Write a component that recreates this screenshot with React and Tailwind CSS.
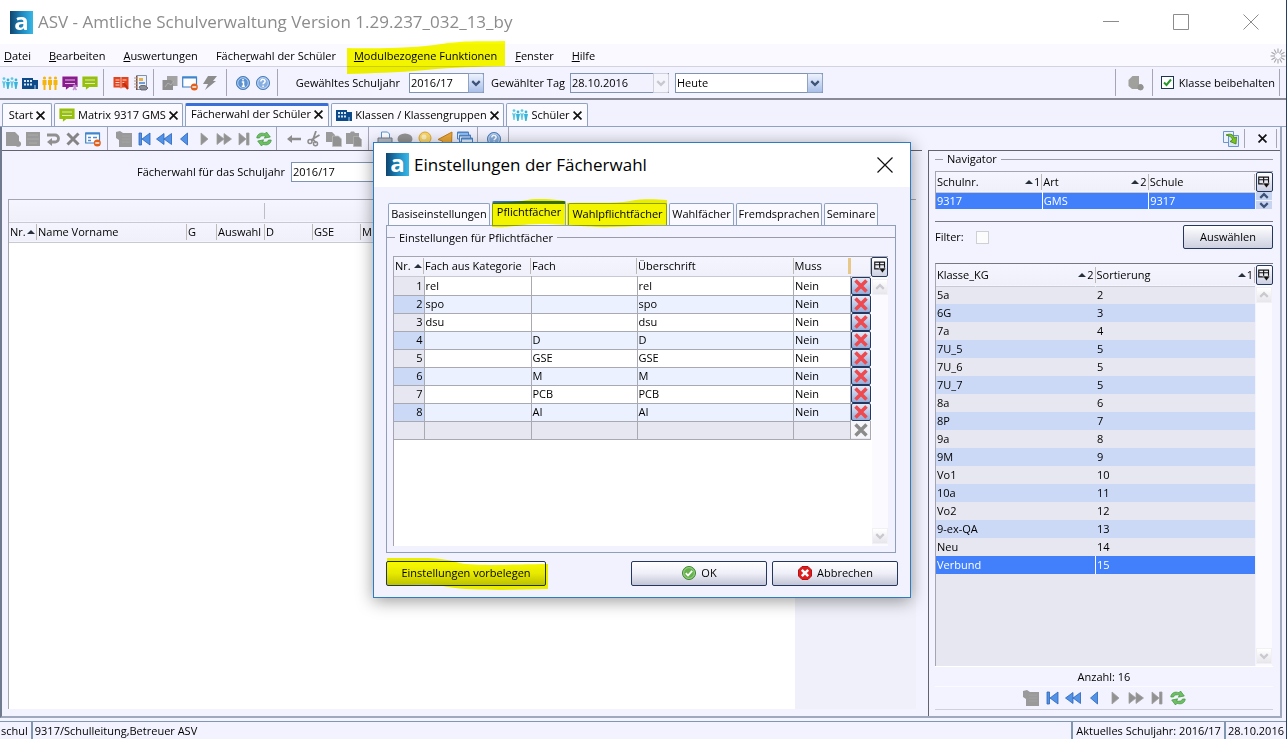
import React from "react";

const GRAY = "#9a9a9a";

function Svg({ children, className = "size-4" }) {
  return (
    <svg viewBox="0 0 16 16" className={`${className} shrink-0`} fill="none" aria-hidden="true">
      {children}
    </svg>
  );
}

/* ---------- icons ---------- */
const PeopleCyan = () => (
  <Svg>
    {[2, 6, 10, 14].map((x, i) => (
      <g key={x} fill={i % 2 ? "#36b5d8" : "#5cc8e4"}>
        <circle cx={x} cy={i % 2 ? 5 : 3.6} r="1.4" />
        <path d={i % 2 ? `M${x - 2} 7h4l-.8 3.5-.6 3.5h-1.4l-.6-3.500z` : `M${x - 2} 5.500l1.200 1h1.600l1.200-1-1 3.500-.4 4h-1.200l-.5-4z`} />
      </g>
    ))}
  </Svg>
);
const Building = () => (
  <Svg>
    <path d="M0 3h11v2h5v9H0z" fill="#0d4a8a" />
    <path d="M2 5h2v2H2zM5 5h2v2H5zM8 5h2v2H8zM2 8.500h2v2H2zM5 8.500h2v2H5zM8 8.500h2v2H8z" fill="#d5e6f6" />
    <path d="M12 10h2v4h-2z" fill="#5d8fc0" />
  </Svg>
);
const PeopleYellow = () => (
  <Svg>
    {[2.5, 8, 13.5].map((x) => (
      <g key={x} fill="#f5b50d">
        <circle cx={x} cy="3" r="1.600" />
        <path d={`M${x - 2} 5h4v5h-1v5h-2v-5h-1z`} />
      </g>
    ))}
  </Svg>
);
const Board = ({ color, badge }) => (
  <Svg>
    <path d="M1 2h14v9.500H7l-2.500 2v-2H1z" fill={color} stroke={color} strokeWidth="1.200" />
    <path d="M3 5h10M3 8.500h10" stroke="#fff" strokeOpacity=".7" strokeWidth="1.100" />
    {badge && <path d="M11 10.500l3.500 4.500M14.500 10.500L11 15M12.700 9.500v2" stroke="#c28ad0" strokeWidth="1.500" />}
  </Svg>
);
const RedBook = () => (
  <Svg>
    <path d="M.5 2h15v10.500h-6L8 13.500l-1.500-1h-6z" fill="#e2431e" />
    <path d="M2.500 5h4M2.500 7.500h4M2.500 10h4M9.500 5h4M9.500 7.500h2" stroke="#fbd9cf" strokeWidth="1.100" />
    <path d="M8 2v11" stroke="#fbd9cf" strokeWidth=".8" />
    <path d="M10.500 8l4.500 6" stroke="#c42d10" strokeWidth="2.200" />
  </Svg>
);
const Notebook = () => (
  <Svg>
    <path d="M3.500.5h10v14h-10z" fill="#eef3fb" stroke="#8391a8" />
    <path d="M3 1h1.500v14H3z" fill="#7a4a3a" />
    <path d="M1 3h3M1 6h3M1 9h3M1 12h3" stroke="#a98" />
    <path d="M6 3h4v3H6z" fill="#e5b24a" />
    <path d="M6 8h6" stroke="#4b7fcc" strokeWidth="1.500" />
    <path d="M6 12l2-1.500h4l3 2.500-2 2H8z" fill="#8a8d93" stroke="#55585f" strokeWidth=".8" />
  </Svg>
);
const GrayCopy = () => (
  <Svg>
    <path d="M5 1h10.500v10H5z" fill="#a3a3a3" />
    <path d="M.5 5h8.500l2 2v8H.5z" fill="#8f8f8f" />
    <path d="M3 12l3-4 3 2 3-4" stroke="#b0b0b0" />
  </Svg>
);
const WindowMinus = ({ lines }) => (
  <Svg>
    <path d="M.7 2h13.800v10H.7z" fill="#fff" stroke="#3f7fc4" strokeWidth="1.200" />
    <path d="M.5 1.500h14.200v2H.5z" fill="#3f86d0" />
    {lines && <path d="M3 6.500h3M3 9.500h3M8 6.500h4" stroke="#4b8cd4" strokeWidth="1.300" />}
    <circle cx="12.300" cy="12" r="3.500" fill="#e2601c" />
    <path d="M10.300 12h4" stroke="#fff" strokeWidth="1.400" />
  </Svg>
);
const Bolt = () => (
  <Svg>
    <path d="M6 1h9l-4 5h3L3 15l3-6H1z" fill="#8c8c8c" />
  </Svg>
);
const Round = ({ letter }) => (
  <Svg>
    <circle cx="8" cy="8" r="7" fill="#c4d9f1" />
    <circle cx="8" cy="8" r="6.500" fill={letter === "i" ? "#5b92d2" : "#86aee0"} stroke="#4a7cba" />
    <circle cx="8" cy="8" r="5.300" stroke="#cfe1f6" strokeWidth=".8" />
    {letter === "i" ? (
      <path d="M6.800 7H8.500v4M6.800 11.200h3M8 4v1.600" stroke="#fff" strokeWidth="1.500" />
    ) : (
      <path d="M5.800 6.400c0-2.800 4.400-2.600 4.300 0C10 8 8.100 7.800 8.100 9.300M8.100 10.500v1.500" stroke="#fff" strokeWidth="1.500" />
    )}
  </Svg>
);
const GrayDoc = () => (
  <Svg>
    <path d="M1 1h9l4 4v5a3 3 0 11-3 5H1z" fill={GRAY} />
  </Svg>
);
const GraySave = () => (
  <Svg>
    <path d="M1 1h14v14H1z" fill={GRAY} />
    <path d="M3 4h10M2 8h12M4 12h8" stroke="#ababab" />
  </Svg>
);
const Undo = () => (
  <Svg>
    <path d="M2 4h8a3.500 3.500 0 010 7H5" stroke="#909090" strokeWidth="2.800" />
    <path d="M7 7v8l-5-4z" fill="#909090" />
  </Svg>
);
const Cross = ({ color = "#858585", width = 3 }) => (
  <Svg>
    <path d="M2.500 2.500l11 11M13.500 2.500l-11 11" stroke={color} strokeWidth={width} />
  </Svg>
);
const Clipboard = () => (
  <Svg>
    <path d="M0 1l4-1 3 2h9v14H3V9L0 7z" fill={GRAY} />
    <path d="M6 5h8M6 8h8M6 11h8" stroke="#a3a3a3" />
  </Svg>
);
function Nav({ kind, on }) {
  const paths = {
    first: "M3 2h2.500v12H3zM14 2v12L6 8z",
    rew: "M8 2.500v11L.5 8zM15.500 2.500v11L8 8z",
    prev: "M11.500 2v12L4.500 8z",
    next: "M5 2v12l7-6z",
    ffw: "M1 2.500v11L8 8zM8 2.500v11L15.500 8z",
    last: "M3 2v12l7-6zM10.500 2H13v12h-2.500z",
  };
  return (
    <Svg>
      <path d={paths[kind]} fill={on ? "#5393e6" : "#929292"} stroke={on ? "#2a63bd" : "#a0a0a0"} strokeWidth=".8" strokeLinejoin="round" />
    </Svg>
  );
}
const Refresh = () => (
  <Svg>
    <path d="M.8 7C1 3 5 1 9 2.800L10.500 1l3.800 5-6 1.200 1.200-2C6.500 4.200 4 5 3.500 7z" fill="#6cc062" stroke="#3d913a" strokeWidth=".7" />
    <path d="M15.200 9c-.2 4-4.200 6-8.200 4.200L5.500 15 1.700 10l6-1.200-1.200 2c3 1 5.500.2 6-1.800z" fill="#6cc062" stroke="#3d913a" strokeWidth=".7" />
  </Svg>
);
const ArrowLeft = () => (
  <Svg>
    <path d="M1 8l5-4v2.700h9v2.600H6V12z" fill="#8c8c8c" />
  </Svg>
);
const Scissors = () => (
  <Svg>
    <path d="M10 0L6.500 10M13.500 4L5 9" stroke="#8c8c8c" strokeWidth="1.800" />
    <circle cx="4" cy="10.500" r="2" stroke="#8c8c8c" strokeWidth="1.500" />
    <circle cx="9.500" cy="12.800" r="2" stroke="#8c8c8c" strokeWidth="1.500" />
    <path d="M7 8l3 4" stroke="#8c8c8c" strokeWidth="1.500" />
  </Svg>
);
const Copy = () => (
  <Svg>
    <path d="M0 1h6l3 3v7H0z" fill={GRAY} />
    <path d="M6.500 5h6L15.500 8v7.500h-9z" fill="#929292" stroke="#c0c0c0" strokeWidth=".7" />
  </Svg>
);
const Paste = () => (
  <Svg>
    <path d="M0 2h4l1-1.500h3L9 2h4v11H0z" fill={GRAY} />
    <path d="M7.500 5.500h5l3 3v7h-8z" fill="#929292" stroke="#b5b5b5" strokeWidth=".7" />
  </Svg>
);
const Printer = () => (
  <Svg>
    <path d="M4.500 1h6l2 2v5h-8z" fill="#fff" stroke="#5b93d4" />
    <path d="M1 7h14v5H1z" fill="#b6bcc6" stroke="#757d8a" />
    <path d="M3 12h10v3H3z" fill="#e2e8f2" stroke="#757d8a" />
  </Svg>
);
const Eye = () => (
  <Svg>
    <ellipse cx="8" cy="8" rx="7.500" ry="5.500" fill="#949494" />
  </Svg>
);
const Bulb = () => (
  <Svg>
    <circle cx="8" cy="7" r="6" fill="#fbd76c" stroke="#e0a92e" />
    <circle cx="7" cy="6" r="2.500" fill="#fff3c0" />
    <path d="M5.500 12h5v3h-5z" fill="#a7a7a7" />
  </Svg>
);
const Horn = () => (
  <Svg>
    <path d="M15 1l-.5 13L9 11.500 7.500 15l-3-1.500L5.500 10 1 8.500z" fill="#eba93a" stroke="#c27f1a" />
  </Svg>
);
const Windows = () => (
  <Svg>
    {[0, 3, 6].map((d) => (
      <g key={d}>
        <path d={`M${d / 1.5 + 0.5} ${d + 1}h11v7h-11z`} fill="#e6f0fc" stroke="#4a83c8" />
        <path d={`M${d / 1.5 + 0.5} ${d + 1}h11v1.500h-11z`} fill="#4a8ad4" />
      </g>
    ))}
  </Svg>
);
const CloudGear = () => (
  <Svg>
    <path d="M.5 5l4-4H11v8.500a3 3 0 11-1 4.500H4l-3.500-3z" fill="#a0a09c" />
    <circle cx="12.500" cy="12.200" r="3" fill="#929290" />
  </Svg>
);
const Swap = () => (
  <Svg>
    <path d="M.5.500h10v11H.5z" fill="#edf3fc" stroke="#6b94d0" />
    <path d="M5.500 4.500h10v11h-10z" fill="#dce8f8" stroke="#6b94d0" />
    <path d="M3 4c5-2 8 0 8 3l2.500-1-.5 7-6-2.500L9.500 9C9 6 7 5 3 4z" fill="#7ac520" stroke="#3b7d15" strokeWidth=".8" />
  </Svg>
);
const Spinner = () => (
  <Svg>
    {Array.from({ length: 12 }, (_, i) => (
      <path key={i} d="M8 .5v4.500" stroke="#a5a5ab" strokeWidth="1.100" transform={`rotate(${i * 30} 8 8)`} />
    ))}
  </Svg>
);
const ColumnPicker = () => (
  <Svg className="size-3">
    <path d="M1 1.500h13v9H1zM1 5h13M7.500 1.500v9" stroke="#111" strokeWidth="1.500" />
    <path d="M6.500 9.500H16L11.300 16z" fill="#111" stroke="#fff" strokeWidth=".6" />
  </Svg>
);
const Chevron = ({ up, color = "#3d5279" }) => (
  <Svg className="size-2.5">
    <path d={up ? "M2 11l6-6 6 6" : "M2 5l6 6 6-6"} stroke={color} strokeWidth="3.500" />
  </Svg>
);
const SortUp = () => (
  <svg viewBox="0 0 8 4" className="h-1 w-2 shrink-0" aria-hidden="true">
    <path d="M4 0l4 4H0z" fill="#26303a" />
  </svg>
);
const OkIcon = () => (
  <Svg>
    <circle cx="8" cy="8" r="6.500" fill="#67b14d" stroke="#3c8530" />
    <circle cx="8" cy="8" r="5.400" stroke="#a9d998" strokeWidth=".8" />
    <path d="M4.800 8.200L7 10.500l4.200-4.700" stroke="#fff" strokeWidth="1.800" />
  </Svg>
);
const CancelIcon = () => (
  <Svg>
    <path d="M5 1.500h6L14.500 5v6L11 14.500H5L1.500 11V5z" fill="#e01b1b" stroke="#b01515" />
    <path d="M4.800 4.800l6.400 6.400M11.200 4.800l-6.400 6.400" stroke="#fff" strokeWidth="2.500" />
  </Svg>
);

/* ---------- shared parts ---------- */
const Logo = () => (
  <div className="flex size-[23px] shrink-0 items-center justify-center bg-linear-to-r from-[#10456f] via-[#1c86bd] to-[#38b8e6] text-white">
    <span className="-mt-1 text-[24px] leading-[23px] font-bold">a</span>
  </div>
);
const Sep = () => <span className="w-px shrink-0 self-stretch bg-[#a5a5b5]" />;
const IconButton = ({ label, children }) => (
  <button type="button" aria-label={label} className="flex size-5 shrink-0 items-center justify-center">
    {children}
  </button>
);
function Combo({ label, value, className, disabled }) {
  return (
    <span className={`relative flex h-5 shrink-0 ${className}`}>
      <select
        aria-label={label}
        disabled={disabled}
        className={`h-full w-full appearance-none border border-[#7f93b3] pl-px text-[11px] leading-4 text-black opacity-100 ${disabled ? "bg-[#f2f2ff]" : "bg-white"}`}
      >
        <option>{value}</option>
      </select>
      <span
        className={`pointer-events-none absolute inset-y-0 right-0 flex w-4 items-center justify-center rounded-r-xs border ${
          disabled ? "border-[#d0d0dd] bg-[#f4f4fc]" : "border-[#8fa3c4] bg-linear-to-b from-[#eef3fd] to-[#a9bfe8]"
        }`}
      >
        <Chevron color={disabled ? "#c8c8d0" : "#3d5279"} />
      </span>
    </span>
  );
}
const PickerButton = () => (
  <button
    type="button"
    aria-label="Spalten auswählen"
    className="flex h-5 w-[17px] shrink-0 items-center justify-center rounded-xs border border-[#24375e] bg-linear-to-b from-white to-[#ccd0e2]"
  >
    <ColumnPicker />
  </button>
);
const ScrollArrow = ({ up }) => (
  <button
    type="button"
    aria-label={up ? "Nach oben" : "Nach unten"}
    className="flex size-4 items-center justify-center border border-[#f0f0f5] bg-linear-to-b from-white to-[#e6e6ec]"
  >
    <Chevron up={up} color="#c9c9cf" />
  </button>
);
function Scroller() {
  return (
    <div className="flex flex-1 flex-col items-center justify-between bg-[#fafaff] py-0.5">
      <ScrollArrow up />
      <ScrollArrow />
    </div>
  );
}
function Legend({ children }) {
  return (
    <div className="flex h-4 items-center gap-1">
      <span className="h-px w-2 bg-[#9a9aa8]" />
      <span className="leading-4 whitespace-nowrap">{children}</span>
      <span className="h-px flex-1 bg-[#9a9aa8]" />
    </div>
  );
}
function Head({ children, sort, className = "h-5" }) {
  return (
    <th className={`overflow-hidden p-0 font-normal ${className}`}>
      <div className="flex h-4 items-center justify-between border-r border-[#bdb9b4] pl-px text-left leading-4 whitespace-nowrap">
        <span>{children}</span>
        {sort && (
          <span className="flex items-center gap-px pr-px">
            <SortUp />
            {sort !== true && sort}
          </span>
        )}
      </div>
    </th>
  );
}
const HEAD_ROW = "border-b border-[#c9c9d4] bg-linear-to-b from-[#f5f5ff] to-[#f0f0fa]";

/* ---------- top bars ---------- */
function TitleBar() {
  return (
    <header className="flex h-11 items-center bg-white pl-2.5">
      <Logo />
      <h1 className="flex-1 pl-[5px] text-[17px] leading-6 whitespace-nowrap text-[#8c8c8c]">
        ASV - Amtliche Schulverwaltung Version 1.29.237_032_13_by
      </h1>
      <div className="flex items-center gap-[54px] pr-[27px] text-[#8c8c8c]">
        <button type="button" aria-label="Minimieren">
          <Svg><path d="M0 7.500h16" stroke="currentColor" /></Svg>
        </button>
        <button type="button" aria-label="Maximieren">
          <Svg><path d="M.5.500h15v15H.5z" stroke="currentColor" /></Svg>
        </button>
        <button type="button" aria-label="Schließen">
          <Svg><path d="M.5.500l15 15M15.500.5l-15 15" stroke="currentColor" /></Svg>
        </button>
      </div>
    </header>
  );
}

function MenuBar() {
  const item = "whitespace-nowrap";
  return (
    <nav className="flex h-[23px] items-center border-b border-[#d3d3df] bg-[#f9f9ff] pt-px pl-1">
      <div className="flex flex-1 items-center gap-[18px]">
        <button type="button" className={item}><u>D</u>atei</button>
        <button type="button" className={item}><u>B</u>earbeiten</button>
        <button type="button" className={item}><u>A</u>uswertungen</button>
        <button type="button" className={item}>Fäche<u>r</u>wahl der Schüler</button>
        <button type="button" className={`${item} relative`}>
          <u>M</u>odulbezogene Funktionen
          <svg
            viewBox="0 0 159 33"
            preserveAspectRatio="none"
            className="pointer-events-none absolute -top-[7px] -left-[7px] z-10 h-[33px] w-[calc(100%+15px)] mix-blend-multiply"
            aria-hidden="true"
          >
            <path d="M0 7C30 8 70 7 95 3S140 1 159 0v25c-30 1-50 1-80 4S25 32 0 33z" fill="#f8fa00" />
          </svg>
        </button>
        <button type="button" className={item}><u>F</u>enster</button>
        <button type="button" className={item}><u>H</u>ilfe</button>
      </div>
      <Spinner />
    </nav>
  );
}

function MainToolbar() {
  return (
    <div className="flex h-[33px] items-center justify-between border-b-2 border-[#8a8a96] bg-[#f3f3ff] py-0.5 pr-1.5">
      <div className="flex items-center self-stretch">
        <IconButton label="Schüler"><PeopleCyan /></IconButton>
        <IconButton label="Klassen"><Building /></IconButton>
        <IconButton label="Lehrkräfte"><PeopleYellow /></IconButton>
        <IconButton label="Unterricht"><Board color="#8a1d8e" badge /></IconButton>
        <IconButton label="Matrix"><Board color="#97bf0d" /></IconButton>
        <div className="flex items-center self-stretch pl-[3px]">
          <Sep />
          <div className="flex pr-0.5 pl-[7px]">
            <IconButton label="Buch"><RedBook /></IconButton>
            <IconButton label="Notizbuch"><Notebook /></IconButton>
          </div>
          <Sep />
        </div>
        <div className="flex px-1.5">
          <IconButton label="Kopien"><GrayCopy /></IconButton>
          <IconButton label="Fenster schließen"><WindowMinus /></IconButton>
          <IconButton label="Ausführen"><Bolt /></IconButton>
        </div>
        <Sep />
        <div className="flex pr-1 pl-1.5">
          <IconButton label="Info"><Round letter="i" /></IconButton>
          <IconButton label="Hilfe"><Round letter="?" /></IconButton>
        </div>
        <Sep />
        <span className="w-[131px] pr-[9px] text-right whitespace-nowrap">Gewähltes Schuljahr</span>
        <Combo label="Gewähltes Schuljahr" value="2016/17" className="w-[75px]" />
        <span className="w-[86px] pr-[5px] text-right whitespace-nowrap">Gewählter Tag</span>
        <Combo label="Gewählter Tag" value="28.10.2016" className="w-[99px]" disabled />
        <div className="pl-1.5">
          <Combo label="Tag" value="Heute" className="w-[148px]" />
        </div>
      </div>
      <div className="flex items-center self-stretch">
        <Sep />
        <div className="pr-1.5 pl-2.5">
          <IconButton label="Verbindung"><CloudGear /></IconButton>
        </div>
        <Sep />
        <label className="flex items-center gap-[5px] pr-1 pl-2 whitespace-nowrap">
          <span className="relative flex size-[13px]">
            <input type="checkbox" defaultChecked className="size-[13px] appearance-none border border-[#1d3352] bg-white" />
            <svg viewBox="0 0 13 13" className="pointer-events-none absolute inset-0 size-[13px]" fill="none" aria-hidden="true">
              <path d="M3 6.500l2.500 2.500L10 3.500" stroke="#27962b" strokeWidth="2" />
            </svg>
          </span>
          Klasse beibehalten
        </label>
        <Sep />
      </div>
    </div>
  );
}

function TabX() {
  return (
    <Svg className="size-[9px]">
      <path d="M1 1l14 14M15 1L1 15" stroke="#111" strokeWidth="3" />
    </Svg>
  );
}

function WorkTabs() {
  const tab = "flex h-[23px] shrink-0 items-center justify-center rounded-t-xs border border-b-0 border-[#8ea2c2] bg-[#fbfbff] whitespace-nowrap";
  return (
    <div className="flex h-[27px] items-end gap-0.5 border-b border-[#8ea2c2] bg-[#f2f2fe] pl-0.5">
      <button type="button" className={`${tab} w-[50px] gap-[3px]`}>Start<TabX /></button>
      <button type="button" className={`${tab} w-[129px] gap-[3px]`}><Board color="#97bf0d" />Matrix 9317 GMS<TabX /></button>
      <button type="button" className={`${tab} w-36 gap-[3px] border-t-3 border-t-[#3a6fd8] pb-1`}>Fächerwahl der Schüler<TabX /></button>
      <button type="button" className={`${tab} w-[173px] gap-[3px]`}><Building />Klassen / Klassengruppen<TabX /></button>
      <button type="button" className={`${tab} w-[82px] gap-[3px]`}><PeopleCyan />Schüler<TabX /></button>
    </div>
  );
}

function NavButtons() {
  return (
    <>
      <IconButton label="Liste"><Clipboard /></IconButton>
      <IconButton label="Erster"><Nav kind="first" on /></IconButton>
      <IconButton label="Zurückspulen"><Nav kind="rew" on /></IconButton>
      <IconButton label="Vorheriger"><Nav kind="prev" on /></IconButton>
      <IconButton label="Nächster"><Nav kind="next" /></IconButton>
      <IconButton label="Vorspulen"><Nav kind="ffw" /></IconButton>
      <IconButton label="Letzter"><Nav kind="last" /></IconButton>
      <IconButton label="Aktualisieren"><Refresh /></IconButton>
    </>
  );
}

function WorkToolbar() {
  return (
    <div className="flex h-[23px] items-center justify-between pr-[3px] pl-px">
      <div className="flex items-center self-stretch">
        <div className="flex pr-1">
          <IconButton label="Neu"><GrayDoc /></IconButton>
          <IconButton label="Speichern"><GraySave /></IconButton>
          <IconButton label="Rückgängig"><Undo /></IconButton>
          <IconButton label="Löschen"><Cross /></IconButton>
          <IconButton label="Formular schließen"><WindowMinus lines /></IconButton>
        </div>
        <Sep />
        <div className="flex pr-0.5 pl-1.5"><NavButtons /></div>
        <Sep />
        <div className="flex pr-1 pl-[7px]">
          <IconButton label="Zurück"><ArrowLeft /></IconButton>
          <IconButton label="Ausschneiden"><Scissors /></IconButton>
          <IconButton label="Kopieren"><Copy /></IconButton>
          <IconButton label="Einfügen"><Paste /></IconButton>
        </div>
        <Sep />
        <div className="flex pr-0.5 pl-1.5">
          <IconButton label="Drucken"><Printer /></IconButton>
          <IconButton label="Vorschau"><Eye /></IconButton>
          <IconButton label="Tipp"><Bulb /></IconButton>
          <IconButton label="Meldung"><Horn /></IconButton>
          <IconButton label="Fensterliste"><Windows /></IconButton>
        </div>
        <Sep />
        <div className="flex pr-1 pl-1.5">
          <IconButton label="Hilfe zur Maske"><Round letter="?" /></IconButton>
        </div>
        <Sep />
      </div>
      <div className="flex items-center self-stretch py-0.5">
        <div className="pr-[3px]">
          <IconButton label="Wechseln"><Swap /></IconButton>
        </div>
        <Sep />
        <button type="button" aria-label="Navigator schließen" className="flex w-[31px] justify-center pl-1"><TabX /></button>
        <Sep />
      </div>
    </div>
  );
}

/* ---------- left pane ---------- */
function ChoicePane() {
  return (
    <section className="flex min-w-0 flex-1 flex-col border-t border-[#63636f] pr-1.5 pb-[7px] pl-1.5">
      <div className="flex h-12 items-center pb-1.5">
        <span className="w-[283px] pr-1.5 text-right whitespace-nowrap">
          Fächerwahl für das Schuljahr
        </span>
        <Combo label="Fächerwahl für das Schuljahr" value="2016/17" className="w-[120px]" />
      </div>
      <div className="flex flex-1 flex-col border-t border-l border-[#a5a5b2]">
        <div className="flex flex-1">
          <div className="min-w-0 flex-1 bg-white">
            <table className="w-full table-fixed border-collapse">
              <colgroup>
                <col className="w-7" /><col className="w-[150px]" /><col className="w-[30px]" /><col className="w-12" />
                <col className="w-12" /><col className="w-12" /><col className="w-12" /><col />
              </colgroup>
              <thead>
                <tr className={HEAD_ROW}>
                  <th colSpan={4} className="h-[22px] p-0"><div className="h-4 border-r border-[#bdbdc6]" /></th>
                  <th colSpan={4} className="p-0" />
                </tr>
                <tr className={HEAD_ROW}>
                  <Head sort>Nr.</Head>
                  <Head>Name Vorname</Head>
                  <Head>G</Head>
                  <Head>Auswahl</Head>
                  <Head>D</Head>
                  <Head>GSE</Head>
                  <Head>M</Head>
                  <Head />
                </tr>
              </thead>
            </table>
          </div>
          <div className="w-[121px] bg-[#f0f0fa]" />
        </div>
      </div>
    </section>
  );
}

/* ---------- navigator ---------- */
const CLASSES = [
  ["5a", 2], ["6G", 3], ["7a", 4], ["7U_5", 5], ["7U_6", 5], ["7U_7", 5], ["8a", 6], ["8P", 7],
  ["9a", 8], ["9M", 9], ["Vo1", 10], ["10a", 11], ["Vo2", 12], ["9-ex-QA", 13], ["Neu", 14], ["Verbund", 15],
];

function NavigatorPane() {
  return (
    <section className="flex w-[352px] shrink-0 flex-col border-t border-l border-[#63636f] pr-[7px] pb-1.5 pl-1.5">
      <Legend>Navigator</Legend>
      <div className="mt-1 flex border-t border-l border-[#a5a5b2]">
        <div className="flex-1">
          <table className="w-full table-fixed border-collapse">
            <thead>
              <tr className={HEAD_ROW}>
                <Head sort="1">Schulnr.</Head>
                <Head sort="2">Art</Head>
                <Head>Schule</Head>
              </tr>
            </thead>
            <tbody>
              <tr className="h-[17px] bg-[#417ffb] leading-4 text-white">
                <td className="border-r border-white p-0 pl-px">9317</td>
                <td className="border-r border-white p-0 pl-px">GMS</td>
                <td className="p-0 pl-px">9317</td>
              </tr>
            </tbody>
          </table>
        </div>
        <div className="flex w-[18px] flex-col items-center">
          <PickerButton />
          <button type="button" aria-label="Hoch" className="flex h-2 w-4 items-center justify-center bg-[#c6d4f0]"><Chevron up /></button>
          <button type="button" aria-label="Runter" className="mt-px flex h-2 w-4 items-center justify-center bg-[#c6d4f0]"><Chevron /></button>
        </div>
      </div>
      <div className="mt-3 flex h-[42px] items-start justify-between border-t border-[#77777f] pt-[3px]">
        <label className="flex h-6 items-center gap-3">
          Filter:
          <input type="checkbox" className="size-[13px] appearance-none border border-[#cfcfd6] bg-[#fcfcfc]" />
        </label>
        <button
          type="button"
          className="h-6 w-[90px] rounded-xs border border-[#24375e] bg-linear-to-b from-white to-[#cdd0e0]"
        >
          Auswählen
        </button>
      </div>
      <div className="flex flex-1 border-t border-l border-[#77777f] border-l-[#a5a5b2]">
        <div className="flex-1 bg-[#e7e7f1]">
          <table className="w-full table-fixed border-collapse">
            <thead>
              <tr className={HEAD_ROW}>
                <Head sort="2" className="h-[22px] pt-px">Klasse_KG</Head>
                <Head sort="1" className="h-[22px] pt-px">Sortierung</Head>
              </tr>
            </thead>
            <tbody>
              {CLASSES.map(([name, sort], i) => {
                const tone = name === "Verbund" ? "bg-[#417ffb] text-white" : i % 2 ? "bg-[#cbd9f6]" : "bg-[#e7e7f1]";
                return (
                  <tr key={name} className={`h-[18px] leading-4 ${tone}`}>
                    <td className={`border-r p-0 pl-px ${name === "Verbund" ? "border-white" : "border-transparent"}`}>{name}</td>
                    <td className="p-0 pl-px">{sort}</td>
                  </tr>
                );
              })}
            </tbody>
          </table>
        </div>
        <div className="flex w-[18px] flex-col items-center pt-px">
          <PickerButton />
          <Scroller />
        </div>
      </div>
      <div className="flex h-5 items-center justify-center border-t border-white">Anzahl: 16</div>
      <div className="flex h-6 items-center justify-center gap-px border-y border-t-[#fafaff] border-b-[#d0d0dc]">
        <NavButtons />
      </div>
    </section>
  );
}

/* ---------- dialog ---------- */
const SUBJECTS = [
  ["rel", "", "rel"], ["spo", "", "spo"], ["dsu", "", "dsu"], ["", "D", "D"],
  ["", "GSE", "GSE"], ["", "M", "M"], ["", "PCB", "PCB"], ["", "AI", "AI"],
];

function DialogTabs() {
  const tab = "flex shrink-0 items-center justify-center rounded-t-xs border border-b-0 border-[#8ea2c2] bg-[#f9f9ff] whitespace-nowrap";
  return (
    <div role="tablist" className="relative flex h-6 items-end gap-0.5 pl-0.5">
      <button type="button" role="tab" className={`${tab} h-[22px] w-[102px]`}>Basiseinstellungen</button>
      <button type="button" role="tab" aria-selected="true" className={`${tab} h-6 w-[74px] border-t-3 border-t-[#3a6fc8] pb-1`}>Pflichtfächer</button>
      <button type="button" role="tab" className={`${tab} h-[22px] w-[99px]`}>Wahlpflichtfächer</button>
      <button type="button" role="tab" className={`${tab} h-[22px] w-[65px]`}>Wahlfächer</button>
      <button type="button" role="tab" className={`${tab} h-[22px] w-[86px]`}>Fremdsprachen</button>
      <button type="button" role="tab" className={`${tab} h-[22px] w-[54px]`}>Seminare</button>
      <svg viewBox="0 0 176 29" className="pointer-events-none absolute -top-0.5 left-[106px] z-10 h-[29px] w-[176px] mix-blend-multiply" aria-hidden="true">
        <path d="M0 4C15 3 25 3 35 1S60 0 73 2v24c-25-2-35-1-50 1S8 28 0 28z" fill="#f8fa00" />
        <path d="M75 4C100 3 120 5 138 2S165 1 175 1v25c-30 0-50 3-70 2S85 27 75 26z" fill="#f8fa00" />
      </svg>
    </div>
  );
}

function SubjectTable() {
  const cell = "border-r border-b border-[#a9a9b2] p-0 pl-px";
  return (
    <table className="w-full table-fixed border-collapse">
      <colgroup>
        <col className="w-[30px]" /><col className="w-[107px]" /><col className="w-[106px]" /><col />
        <col className="w-[57px]" /><col className="w-5" />
      </colgroup>
      <thead>
        <tr className={HEAD_ROW}>
          <Head sort>Nr.</Head>
          <Head>Fach aus Kategorie</Head>
          <Head>Fach</Head>
          <Head>Überschrift</Head>
          <th className="p-0 font-normal">
            <div className="flex h-4 items-center border-r-3 border-[#e8c888] pl-px leading-4">Muss</div>
          </th>
          <Head />
        </tr>
      </thead>
      <tbody>
        {SUBJECTS.map(([cat, subject, title], i) => (
          <tr key={title} className={`h-[18px] leading-4 ${i % 2 ? "bg-[#ebf1ff]" : "bg-white"}`}>
            <td className={`${cell} pr-px text-right ${i % 2 ? "bg-[#cbd9f6]" : "bg-[#e7e7f1]"}`}>{i + 1}</td>
            <td className={cell}>{cat}</td>
            <td className={cell}>{subject}</td>
            <td className={cell}>{title}</td>
            <td className={cell}>Nein</td>
            <td className="p-0">
              <button
                type="button"
                aria-label={`${title} löschen`}
                className="flex h-[18px] w-full items-center justify-center rounded-xs border border-[#24375e] bg-linear-to-b from-[#e4ebf8] to-[#93acd9]"
              >
                <Cross color="#ee4a50" width={3.6} />
              </button>
            </td>
          </tr>
        ))}
        <tr className="h-[18px] bg-[#e7e7f1]">
          <td className={cell} /><td className={cell} /><td className={cell} /><td className={cell} /><td className={cell} />
          <td className="border-r border-b border-[#a9a9b2] p-0">
            <button type="button" aria-label="Zeile löschen" disabled className="flex h-[17px] w-full items-center justify-center bg-[#f6f6fa]">
              <Cross color="#8b8b8b" width={3.4} />
            </button>
          </td>
        </tr>
      </tbody>
    </table>
  );
}

function SettingsDialog() {
  const action = "flex h-[25px] items-center justify-center gap-1 rounded-xs border border-[#24375e] bg-linear-to-b from-white via-[#eeeef8] to-[#c3c5d6]";
  return (
    <div className="absolute inset-0 z-20 flex items-center justify-center pr-0.5">
      <div
        role="dialog"
        aria-labelledby="dialog-title"
        className="flex h-[456px] w-[538px] flex-col border border-[#2b7cc0] bg-[#f2f2ff] shadow-[0_3px_16px_rgba(0,0,0,0.4)]"
      >
        <div className="flex h-11 shrink-0 items-center bg-white pr-[17px] pl-3">
          <Logo />
          <h2 id="dialog-title" className="flex-1 pl-[5px] text-[17px] leading-6 text-black">Einstellungen der Fächerwahl</h2>
          <button type="button" aria-label="Schließen">
            <Svg><path d="M.5.500l15 15M15.500.5l-15 15" stroke="#111" strokeWidth="1.200" /></Svg>
          </button>
        </div>
        <div className="flex flex-1 flex-col px-3 pt-3.5 pb-[11px]">
          <DialogTabs />
          <div className="mr-0.5 flex flex-1 flex-col border border-[#8f9fb8] pb-1.5">
            <div className="pt-1"><Legend>Einstellungen für Pflichtfächer</Legend></div>
            <div className="mt-2.5 mr-[7px] ml-1.5 flex flex-1 border-t border-l border-[#a5a5b2] bg-white">
              <div className="flex-1"><SubjectTable /></div>
              <div className="flex w-[17px] flex-col items-center">
                <PickerButton />
                <Scroller />
              </div>
            </div>
          </div>
          <div className="mt-2 flex gap-[5px]">
            <button type="button" className={`${action} relative w-[160px]`}>
              Einstellungen vorbelegen
              <svg viewBox="0 0 162 32" className="pointer-events-none absolute -top-1 -left-px z-10 h-8 w-[162px] mix-blend-multiply" aria-hidden="true">
                <path d="M1 0C20-1 55-1 70 4s60 2 92 2v25c-35 1-75 2-100-2-20-4-40-1-61-2z" fill="#f8fa00" />
              </svg>
            </button>
            <span className="flex-1" />
            <button type="button" className={`${action} w-[136px]`}><OkIcon />OK</button>
            <button type="button" className={`${action} w-[126px]`}><CancelIcon />Abbrechen</button>
          </div>
        </div>
      </div>
    </div>
  );
}

export default function App() {
  return (
    <div className="relative flex min-h-screen flex-col border-r border-[#27405f] bg-[#f3f3ff] font-['Open_Sans','Noto_Sans',sans-serif] text-[11px] leading-4 text-black">
      <TitleBar />
      <MenuBar />
      <MainToolbar />
      <WorkTabs />
      <main className="mr-1 flex flex-1 flex-col border-r-2 border-b-2 border-l-2 border-[#9fa8bd] border-l-[#6f7a8e]">
        <WorkToolbar />
        <div className="flex flex-1 gap-1.5">
          <ChoicePane />
          <NavigatorPane />
        </div>
      </main>
      <footer className="mt-[3px] flex h-[18px] items-center border-t border-[#7f97b0]">
        <span className="border-r-2 border-[#7f97b0] pr-[3px] pl-px leading-[17px]">schul</span>
        <span className="flex-1 pl-0.5">9317/Schulleitung,Betreuer ASV</span>
        <span className="border-x-2 border-[#7f97b0] px-[3px] leading-[17px]">Aktuelles Schuljahr: 2016/17</span>
        <span className="px-0.5">28.10.2016</span>
      </footer>
      <SettingsDialog />
    </div>
  );
}
